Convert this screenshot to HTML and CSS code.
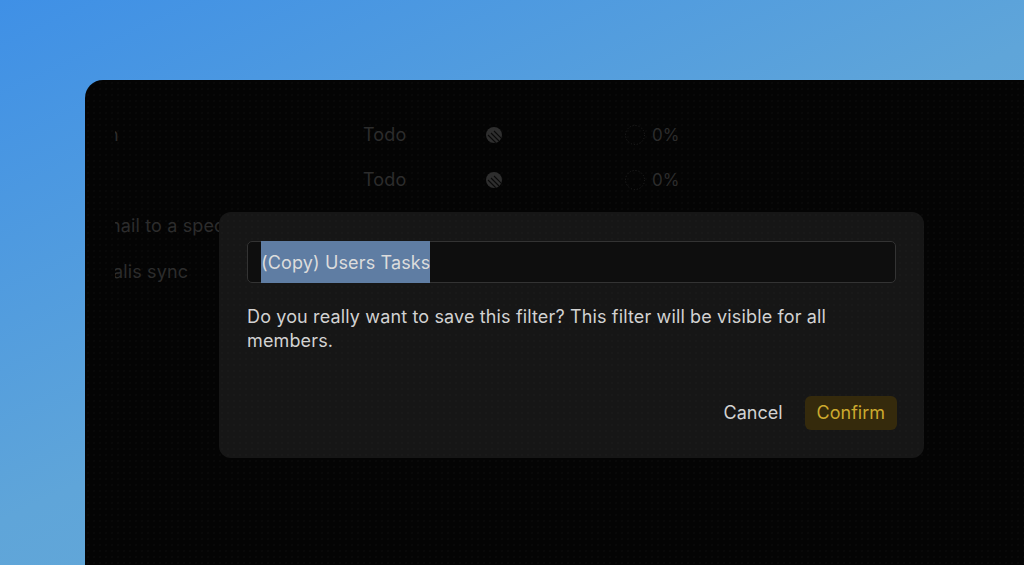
FILE: index.html
```html
<!DOCTYPE html>
<html lang="en">

<head>
  <meta charset="UTF-8" />
  <meta name="viewport" content="width=device-width, initial-scale=1.0" />
  <title>Save filter</title>
  <link rel="stylesheet" href="styles.css">
</head>

<body>
  <div class="window">
    <div class="list">
      <div class="row">
        <div class="name"><span class="clip-1">n</span></div>
        <div class="status">Todo</div>
        <div class="dot-cell"><svg class="dot" viewBox="0 0 18 18"><use href="#moon" /></svg></div>
        <div class="progress"><svg class="ring" viewBox="0 0 22 22"><circle cx="11" cy="11" r="9.5" /></svg>0%</div>
      </div>
      <div class="row">
        <div class="name"></div>
        <div class="status">Todo</div>
        <div class="dot-cell"><svg class="dot" viewBox="0 0 18 18"><use href="#moon" /></svg></div>
        <div class="progress"><svg class="ring" viewBox="0 0 22 22"><circle cx="11" cy="11" r="9.5" /></svg>0%</div>
      </div>
      <div class="row tall">
        <div class="name"><span class="clip-3">nail to a specific user</span></div>
      </div>
      <div class="row tall">
        <div class="name"><span class="clip-4">alis sync</span></div>
      </div>
    </div>

    <div class="dialog">
      <div class="field"><span class="selected">(Copy) Users Tasks</span></div>
      <p class="message">Do you really want to save this filter? This filter will be visible for all members.</p>
      <div class="actions">
        <button class="btn">Cancel</button>
        <button class="btn confirm">Confirm</button>
      </div>
    </div>
  </div>

  <svg class="defs" width="0" height="0">
    <defs>
      <clipPath id="disc"><circle cx="9" cy="9" r="8" /></clipPath>
      <g id="moon" clip-path="url(#disc)">
        <rect width="18" height="18" fill="#2e2e2e" />
        <path d="M9 5l9 9M6 7l9 9M3 9l8 8" stroke="#0a0a0a" stroke-width="1.100" />
      </g>
    </defs>
  </svg>
</body>

</html>
```

FILE: styles.css
```css
*,
::before,
::after {
  box-sizing: border-box;
}

html {
  font-family: Inter, 'Noto Sans', sans-serif;
  letter-spacing: 0.14px;
}

body {
  margin: 0;
  height: 565px;
  overflow: hidden;
  padding: 80px 0 0 85px;
  background: linear-gradient(155deg, #3f90e6 0%, #5fa5d9 50%, #6aabd4 100%);
}

.defs {
  position: absolute;
}

/* app window behind the dialog */
.window {
  position: relative;
  height: 485px;
  border-radius: 18px 0 0 0;
  background-color: #040404;
  background-image: radial-gradient(circle, #0e0e0e 0.6px, transparent 0.8px);
  background-size: 6px 6px;
  padding: 32px 0 0 30px;
}

.row {
  display: grid;
  grid-template-columns: 248px 122px 139px 1fr;
  align-items: center;
  height: 45px;
  font-size: 18px;
  color: #2c2c2c;
}

.tall {
  height: 46px;
}

.name {
  overflow: hidden;
  white-space: nowrap;
}

.clip-1 {
  display: block;
  margin-left: -7px;
}

.clip-3 {
  display: block;
  margin-left: -5px;
}

.clip-4 {
  display: block;
  margin-left: -2px;
}

.dot-cell {
  display: flex;
}

.dot {
  width: 18px;
  height: 18px;
}

.progress {
  display: flex;
  align-items: center;
  gap: 6px;
  font-size: 17px;
  letter-spacing: 0;
}

.ring {
  width: 22px;
  height: 22px;
  fill: none;
  stroke: #222;
  stroke-width: 1;
  stroke-dasharray: 1 2;
}

/* dialog */
.dialog {
  position: absolute;
  left: 134px;
  top: 132px;
  width: 705px;
  height: 246px;
  padding: 29px 28px 28px;
  border-radius: 12px;
  background-color: #161616;
  background-image: radial-gradient(circle, #1c1c1c 0.6px, transparent 0.8px);
  background-size: 6px 6px;
  display: flex;
  flex-direction: column;
}

.field {
  height: 42px;
  border: 1px solid #333;
  border-radius: 5px;
  background: #0e0e0e;
  padding-left: 13px;
  display: flex;
}

.selected {
  margin: -1px 0;
  display: flex;
  align-items: center;
  background: #5f7da3;
  color: #dcdcdc;
  font-size: 18px;
  white-space: nowrap;
}

.message {
  margin: 22px 0 0;
  font-size: 18px;
  line-height: 24px;
  color: #d2d2d2;
}

.actions {
  margin-top: auto;
  display: flex;
  justify-content: flex-end;
  align-items: center;
  gap: 10px;
  margin-right: -1px;
}

.btn {
  height: 34px;
  padding: 0 12px 1px;
  border: 0;
  border-radius: 6px;
  background: none;
  font: inherit;
  font-size: 18px;
  letter-spacing: 0;
  color: #d2d2d2;
}

.confirm {
  background: #352a0c;
  color: #cca92e;
}
```
